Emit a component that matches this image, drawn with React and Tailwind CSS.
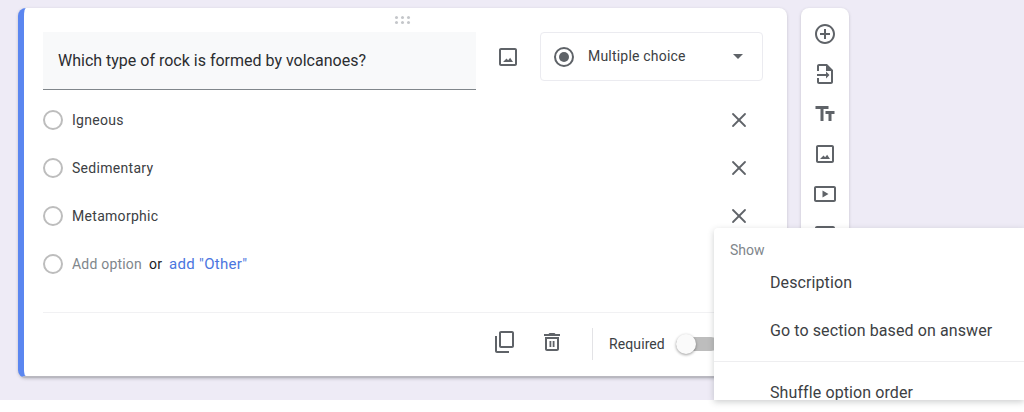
import { X } from 'lucide-react';

const font = { fontFamily: 'Roboto' };

// ── Icons ─────────────────────────────────────────────────────────────────────

function Icon({ d, size = 24, children, className = 'text-[#5f6368]' }) {
  return (
    <svg width={size} height={size} viewBox="0 0 24 24" fill="currentColor" className={`shrink-0 ${className}`}>
      {d && <path d={d} />}
      {children}
    </svg>
  );
}

const IMAGE = 'M19 5v14H5V5h14m0-2H5c-1.1 0-2 .9-2 2v14c0 1.1.9 2 2 2h14c1.1 0 2-.9 2-2V5c0-1.1-.9-2-2-2zm-4.86 9.86l-2 2.4L10.5 13.6 7 17h10l-2.86-4.14z';
const ADD = 'M13 7h-2v4H7v2h4v4h2v-4h4v-2h-4V7zm-1-5C6.48 2 2 6.48 2 12s4.48 10 10 10 10-4.48 10-10S17.52 2 12 2zm0 18c-4.41 0-8-3.59-8-8s3.59-8 8-8 8 3.59 8 8-3.59 8-8 8z';
const TITLE = 'M2.5 4v3h5v12h3V7h5V4h-13zm19 5h-9v3h3v7h3v-7h3V9z';
const IMPORT = 'M6 2h8l6 6v12c0 1.1-.9 2-2 2H6c-1.1 0-2-.9-2-2v-4h2v4h12V9h-5V4H6v5H4V4c0-1.1.9-2 2-2zM4 12h9V9.5l3.5 3.5-3.5 3.5V14H4v-2z';
const VIDEO = 'M21 4H3c-1.1 0-2 .9-2 2v12c0 1.1.9 2 2 2h18c1.1 0 2-.9 2-2V6c0-1.1-.9-2-2-2zm0 14H3V6h18v12zM9.5 8.5v7l6-3.5-6-3.5z';
const SECTION = 'M20 4H4c-1.1 0-2 .9-2 2v12c0 1.1.9 2 2 2h16c1.1 0 2-.9 2-2V6c0-1.1-.9-2-2-2zm0 14H4v-6h16v6zm0-8H4V6h16v4z';
const TRASH = 'M5 7v12c0 1.1.9 2 2 2h10c1.1 0 2-.9 2-2V7H5zm2 2h10v10H7V9zm8.5-5l-1-1h-5l-1 1H4v2h16V4h-4.5zM9.5 11h1.8v6H9.5v-6zm3.2 0h1.8v6h-1.8v-6z';
const COPY = 'M9 1h11c1.1 0 2 .9 2 2v13c0 1.1-.9 2-2 2H9c-1.1 0-2-.9-2-2V3c0-1.1.9-2 2-2zm0 2v13h11V3H9zM3 6h2v15h12v2H5c-1.1 0-2-.9-2-2V6z';

function Radio() {
  return <div className="w-5 h-5 rounded-full border-2 border-[#bdbdbd] shrink-0" />;
}

function OptionRow({ label }) {
  return (
    <div className="h-12 flex items-center">
      <Radio />
      <span className="ml-[9px] text-[14px] text-[#3c4043] tracking-[0.3px]">{label}</span>
      <X size={24} strokeWidth={1.8} className="ml-auto mr-[12px] text-[#5f6368]" />
    </div>
  );
}

function DragHandle() {
  return (
    <div className="h-6 flex items-center justify-center pr-[2px]">
      <div className="grid grid-cols-3 gap-x-[3px] gap-y-[2px] mb-[1px]">
        {[0, 1, 2, 3, 4, 5].map((i) => (
          <div key={i} className="w-[3px] h-[3px] rounded-full bg-[#c4c6ca]" />
        ))}
      </div>
    </div>
  );
}

// ── Question card ─────────────────────────────────────────────────────────────

function QuestionCard() {
  return (
    <div className="w-[769px] h-[370px] shrink-0 bg-white rounded-lg overflow-hidden border-l-[6px] border-l-[#5b86f0] border-b-2 border-b-[#b9b8c0] shadow-[0_1px_3px_rgba(60,64,67,0.25)] flex flex-col pl-[19px] pr-6">
      <DragHandle />

      <div className="flex items-start">
        <div className="w-[433px] h-[58px] bg-[#f8f9fa] border-b border-[#80868b] flex items-center pl-[15px] text-[16px] text-[#2b2d30]">
          Which type of rock is formed by volcanoes?
        </div>
        <div className="w-16 h-[49px] flex items-center justify-center">
          <Icon d={IMAGE} />
        </div>
        <div className="flex-1 h-[49px] rounded border border-[#ebebf0] flex items-center pl-[13px] pr-[19px]">
          <div className="w-5 h-5 rounded-full border-2 border-[#5f6368] flex items-center justify-center shrink-0">
            <div className="w-[10px] h-[10px] rounded-full bg-[#5f6368]" />
          </div>
          <span className="ml-[14px] text-[14px] text-[#3c4043] tracking-[0.2px]">Multiple choice</span>
          <div className="ml-auto w-0 h-0 border-x-[5px] border-x-transparent border-t-[5px] border-t-[#5f6368]" />
        </div>
      </div>

      <div className="mt-[6px]">
        <OptionRow label="Igneous" />
        <OptionRow label="Sedimentary" />
        <OptionRow label="Metamorphic" />
        <div className="h-12 flex items-center text-[14px] tracking-[0.2px]">
          <Radio />
          <span className="ml-[9px] text-[#80868b]">Add option</span>
          <span className="ml-[7px] text-[#202124]">or</span>
          <span className="ml-[7px] text-[15px] text-[#4a76e0] tracking-[0.3px]">add "Other"</span>
        </div>
      </div>

      <div className="mt-6 border-t border-[#f1f1f3] flex-1 flex items-center pb-[2px]">
        <div className="ml-[449px] flex items-center">
          <div className="mb-[4px]"><Icon d={COPY} /></div>
          <div className="ml-6 mb-[4px]"><Icon d={TRASH} /></div>
          <div className="ml-[28px] w-px h-8 bg-[#e3e3e6]" />
          <span className="ml-4 mt-[1px] text-[14px] text-[#3c4043] tracking-[0.1px]">Required</span>
          <div className="ml-[11px] relative w-[42px] h-[14px] rounded-full bg-[#bdbdbd]">
            <div className="absolute left-0 top-[-3px] w-5 h-5 rounded-full bg-[#fafafa] shadow-[0_1px_3px_rgba(0,0,0,0.4)]" />
          </div>
        </div>
      </div>
    </div>
  );
}

// ── Side toolbar ──────────────────────────────────────────────────────────────

function SideToolbar() {
  const icons = [ADD, IMPORT, TITLE, IMAGE, VIDEO, SECTION];
  return (
    <div className="w-12 h-[270px] shrink-0 bg-white rounded-lg shadow-[0_1px_3px_rgba(60,64,67,0.25)] py-[6px] flex flex-col">
      {icons.map((d) => (
        <div key={d} className="h-10 flex items-center justify-center">
          <Icon d={d} />
        </div>
      ))}
    </div>
  );
}

// ── Overflow menu ─────────────────────────────────────────────────────────────

function OptionsMenu() {
  return (
    <div className="absolute left-[714px] top-[228px] w-[310px] h-[172px] bg-white rounded-tl overflow-hidden shadow-[0_2px_6px_rgba(60,64,67,0.25)]">
      <div className="h-11 flex items-center pl-4 text-[14px] text-[#80868b]">Show</div>
      <div className="h-[44px] flex items-center pl-14 text-[16px] text-[#3c4043] tracking-[0.1px] mt-[-11px]">Description</div>
      <div className="h-[48px] mt-[2px] flex items-center pl-14 text-[16px] text-[#3c4043] tracking-[0.1px]">Go to section based on answer</div>
      <div className="mt-[6px] border-t border-[#eeeef0] pt-[19px] pl-14 text-[16px] text-[#3c4043] tracking-[0.1px]">Shuffle option order</div>
    </div>
  );
}

export default function App() {
  return (
    <div className="w-[1024px] h-[412px] bg-white overflow-hidden relative" style={font}>
      <div className="h-[400px] bg-[#eeebf6] overflow-hidden pt-2 pl-[18px] flex items-start gap-[14px]">
        <QuestionCard />
        <SideToolbar />
      </div>
      <OptionsMenu />
    </div>
  );
}
